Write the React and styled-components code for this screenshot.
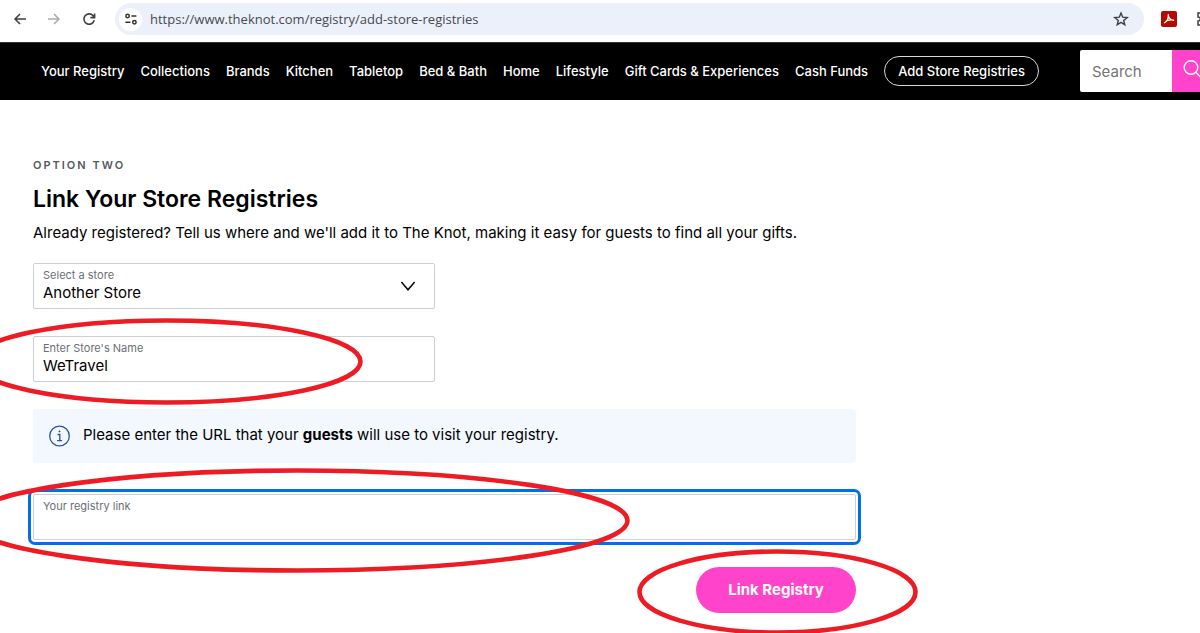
import React from "react";
import styled, { createGlobalStyle } from "styled-components";

const GlobalStyle = createGlobalStyle`
  *, *::before, *::after { box-sizing: border-box; }
  body {
    margin: 0;
    background: #fff;
    color: #000;
    font-family: Inter, "Liberation Sans", sans-serif;
    font-size: 15px;
  }
  button, input, select { font: inherit; color: inherit; }
`;

const Page = styled.div`
  display: flex;
  flex-direction: column;
  min-height: 100vh;
  overflow: hidden;
`;

const BrowserBar = styled.div`
  display: flex;
  align-items: center;
  height: 42px;
  padding: 0 0 4px 12px;
  overflow: hidden;
`;

const IconButton = styled.button`
  display: grid;
  place-items: center;
  flex: none;
  width: 16px;
  height: 16px;
  margin-right: ${(p) => p.$gap || 0}px;
  padding: 0;
  border: 0;
  background: none;
  color: ${(p) => p.$color || "#3c4043"};
`;

const AddressBar = styled.div`
  display: flex;
  align-items: center;
  flex: 1;
  height: 32px;
  padding: 0 15px 0 4px;
  border-radius: 16px;
  background: #ebf0fa;
`;

const SiteInfo = styled.button`
  display: grid;
  place-items: center;
  flex: none;
  width: 23px;
  height: 23px;
  padding: 0;
  border: 0;
  border-radius: 50%;
  background: #fff;
  color: #303134;
`;

const UrlInput = styled.input`
  flex: 1;
  min-width: 0;
  padding: 0 8px;
  border: 0;
  background: none;
  font-family: "Open Sans", sans-serif;
  font-size: 13px;
  color: #474a4f;
`;

const Extensions = styled.div`
  display: flex;
  align-items: center;
  flex: none;
  width: 56px;
  padding-left: 17px;
  overflow: hidden;
`;

const SiteHeader = styled.header`
  display: flex;
  align-items: center;
  height: 58px;
  padding-left: 41px;
  overflow: hidden;
  background: #000;
  box-shadow: inset 0 1px #2e3032;
  color: #fff;
`;

const Nav = styled.nav`
  display: flex;
  align-items: center;
  flex: none;
  gap: 16px;
`;

const NavLink = styled.a`
  font-size: 13px;
  font-weight: 500;
  line-height: 20px;
  white-space: nowrap;
  color: #fff;
  text-decoration: none;
`;

const PillLink = styled(NavLink)`
  padding: 4px 13px;
  border: 1px solid #d8d8d8;
  border-radius: 15px;
`;

const Search = styled.form`
  display: flex;
  flex: none;
  height: 42px;
  margin-left: 41px;
`;

const SearchInput = styled.input`
  width: 92px;
  padding: 0 12px;
  border: 0;
  border-radius: 2px 0 0 2px;
  background: #fff;
  color: #000;
  &::placeholder { color: #757575; opacity: 1; }
`;

const SearchButton = styled.button`
  width: 42px;
  padding: 0;
  border: 0;
  background: #ff44cb;
  color: #fff;
`;

const Main = styled.main`
  flex: 1;
  padding: 57px 33px 20px;
`;

const Form = styled.form`
  display: flex;
  flex-direction: column;
  max-width: 823px;
`;

const Eyebrow = styled.p`
  margin: 0 0 12px;
  font-size: 11px;
  font-weight: 600;
  line-height: 16px;
  letter-spacing: 2px;
  color: #55585e;
`;

const Heading = styled.h1`
  margin: 0 0 10px;
  font-size: 23px;
  font-weight: 600;
  line-height: 28px;
`;

const Intro = styled.p`
  margin: 0 0 20px;
  line-height: 20px;
`;

const Field = styled.div`
  position: relative;
  display: flex;
  flex-direction: column;
  width: 100%;
  max-width: ${(p) => (p.$wide ? "none" : "402px")};
  height: 46px;
  margin-bottom: 27px;
  padding: 4px 9px;
  border: 1px solid #cdcfd2;
  border-radius: 2px;
  outline: ${(p) => (p.$active ? "3px solid #0070e8" : "none")};
  outline-offset: 2px;
`;

const Label = styled.label`
  font-size: 11px;
  line-height: 14px;
  color: #6b6e76;
`;

const TextInput = styled.input`
  height: 22px;
  padding: 0;
  border: 0;
  outline: 0;
  background: none;
  line-height: 22px;
`;

const Select = styled.select`
  appearance: none;
  height: 22px;
  padding: 0;
  border: 0;
  outline: 0;
  background: none;
  line-height: 22px;
`;

const Chevron = styled.svg`
  position: absolute;
  top: 14px;
  right: 18px;
  pointer-events: none;
`;

const Notice = styled.div`
  display: flex;
  align-items: center;
  gap: 12px;
  height: 54px;
  margin-bottom: 31px;
  padding: 0 16px;
  border-radius: 3px;
  background: #f3f8ff;
`;

const NoticeText = styled.p`
  margin: 0;
  padding-bottom: 2px;
  line-height: 20px;
`;

const SubmitSlot = styled.div`
  position: relative;
  align-self: flex-end;
`;

const SubmitButton = styled.button`
  width: 160px;
  height: 46px;
  padding: 0 0 2px;
  border: 0;
  border-radius: 23px;
  background: #ff44cb;
  color: #fff;
  font-weight: 700;
`;

const Ring = styled.svg`
  position: absolute;
  z-index: 1;
  top: ${(p) => p.$top}px;
  left: ${(p) => p.$left}px;
  pointer-events: none;
`;

function Highlight({ top, left, width, height }) {
  return (
    <Ring $top={top} $left={left} width={width} height={height} aria-hidden="true">
      <ellipse
        cx={width / 2}
        cy={height / 2}
        rx={width / 2 - 2.5}
        ry={height / 2 - 2.5}
        fill="none"
        stroke="#ed1c24"
        strokeWidth="4.6"
      />
    </Ring>
  );
}

const NAV_ITEMS = [
  "Your Registry",
  "Collections",
  "Brands",
  "Kitchen",
  "Tabletop",
  "Bed & Bath",
  "Home",
  "Lifestyle",
  "Gift Cards & Experiences",
  "Cash Funds",
];

function BrowserToolbar() {
  return (
    <BrowserBar>
      <IconButton aria-label="Back" $gap={18}>
        <svg width="16" height="16" viewBox="0 0 16 16" fill="none" stroke="currentColor" strokeWidth="1.5">
          <path d="M14 8H3M8 3L3 8l5 5" />
        </svg>
      </IconButton>
      <IconButton aria-label="Forward" $gap={19} $color="#a8aaad">
        <svg width="16" height="16" viewBox="0 0 16 16" fill="none" stroke="currentColor" strokeWidth="1.5">
          <path d="M2 8h11M8 3l5 5-5 5" />
        </svg>
      </IconButton>
      <IconButton aria-label="Reload" $gap={18}>
        <svg width="16" height="16" viewBox="0 0 16 16" fill="none" stroke="currentColor" strokeWidth="1.6">
          <path d="M13.2 9.2A5.2 5.2 0 1 1 12 4.6L13.6 6.4M13.6 2.4v4.2H9.4" />
        </svg>
      </IconButton>
      <AddressBar>
        <SiteInfo aria-label="View site information">
          <svg width="14" height="14" viewBox="0 0 14 14" fill="none" stroke="currentColor" strokeWidth="1.5">
            <circle cx="3.6" cy="4" r="1.7" />
            <path d="M7.4 4h5M1.4 10.2h5" />
            <circle cx="10.4" cy="10.2" r="1.7" />
          </svg>
        </SiteInfo>
        <UrlInput
          aria-label="Address"
          defaultValue="https://www.theknot.com/registry/add-store-registries"
        />
        <IconButton aria-label="Bookmark this page">
          <svg width="16" height="16" viewBox="0 0 16 16" fill="none" stroke="currentColor" strokeWidth="1.4">
            <path d="M8 2l1.7 4.2 4.5.3-3.5 2.9 1.1 4.4L8 11.4l-3.8 2.4 1.1-4.4L1.8 6.5l4.5-.3z" />
          </svg>
        </IconButton>
      </AddressBar>
      <Extensions>
        <IconButton aria-label="PDF tools" $gap={19}>
          <svg width="16" height="16" viewBox="0 0 16 16">
            <rect width="16" height="16" rx="2" fill="#b30b00" />
            <path
              d="M7.3 3.6c.2 2.2 0 3.6-.9 5.2-.8 1.3-1.8 2.2-2.9 2.9M7.4 4.6c.5 2.3 2 4.3 5.2 4.7M5.8 9.7c2-.7 4.4-1 6.8-.5"
              fill="none"
              stroke="#fff"
              strokeWidth="1.3"
              strokeLinecap="round"
            />
          </svg>
        </IconButton>
        <IconButton aria-label="Extensions">
          <svg width="16" height="16" viewBox="0 0 16 16" fill="none" stroke="currentColor" strokeWidth="1.5">
            <path d="M5 2H2v4c3 0 3 4 0 4v4h11V2H8" />
          </svg>
        </IconButton>
      </Extensions>
    </BrowserBar>
  );
}

export default function App() {
  return (
    <Page>
      <GlobalStyle />
      <BrowserToolbar />
      <SiteHeader>
        <Nav>
          {NAV_ITEMS.map((item) => (
            <NavLink href="#" key={item}>{item}</NavLink>
          ))}
          <PillLink href="#">Add Store Registries</PillLink>
        </Nav>
        <Search>
          <SearchInput type="text" placeholder="Search" aria-label="Search" />
          <SearchButton type="button" aria-label="Submit search">
            <svg width="20" height="20" viewBox="0 0 20 20" fill="none" stroke="currentColor" strokeWidth="1.4">
              <circle cx="8" cy="8.5" r="6.8" />
              <path d="M13 13.5l5 5" />
            </svg>
          </SearchButton>
        </Search>
      </SiteHeader>
      <Main>
        <Form>
          <Eyebrow>OPTION TWO</Eyebrow>
          <Heading>Link Your Store Registries</Heading>
          <Intro>
            Already registered? Tell us where and we'll add it to The Knot, making it easy for guests to find all your gifts.
          </Intro>
          <Field>
            <Label htmlFor="store">Select a store</Label>
            <Select id="store">
              <option>Another Store</option>
            </Select>
            <Chevron width="16" height="16" viewBox="0 0 16 16" fill="none" stroke="#000" strokeWidth="1.4">
              <path d="M1.4 4L8 11.8 14.6 4" />
            </Chevron>
          </Field>
          <Field>
            <Label htmlFor="store-name">Enter Store's Name</Label>
            <TextInput id="store-name" type="text" defaultValue="WeTravel" />
            <Highlight top={-19} left={-64} width={393} height={87} />
          </Field>
          <Notice>
            <svg width="22" height="22" viewBox="0 0 22 22" fill="none" stroke="#2a52a3" strokeWidth="1.3">
              <circle cx="10.5" cy="11" r="9.8" />
              <path d="M8.5 9.5h2.3v6M8.1 15.7h5" />
              <circle cx="10.5" cy="6.4" r=".6" fill="#2a52a3" strokeWidth=".8" />
            </svg>
            <NoticeText>
              Please enter the URL that your <b>guests</b> will use to visit your registry.
            </NoticeText>
          </Notice>
          <Field $wide $active>
            <Label htmlFor="registry-link">Your registry link</Label>
            <TextInput id="registry-link" type="url" />
            <Highlight top={-27} left={-70} width={666} height={105} />
          </Field>
          <SubmitSlot>
            <SubmitButton type="button">Link Registry</SubmitButton>
            <Highlight top={-18} left={-59} width={281} height={86} />
          </SubmitSlot>
        </Form>
      </Main>
    </Page>
  );
}
